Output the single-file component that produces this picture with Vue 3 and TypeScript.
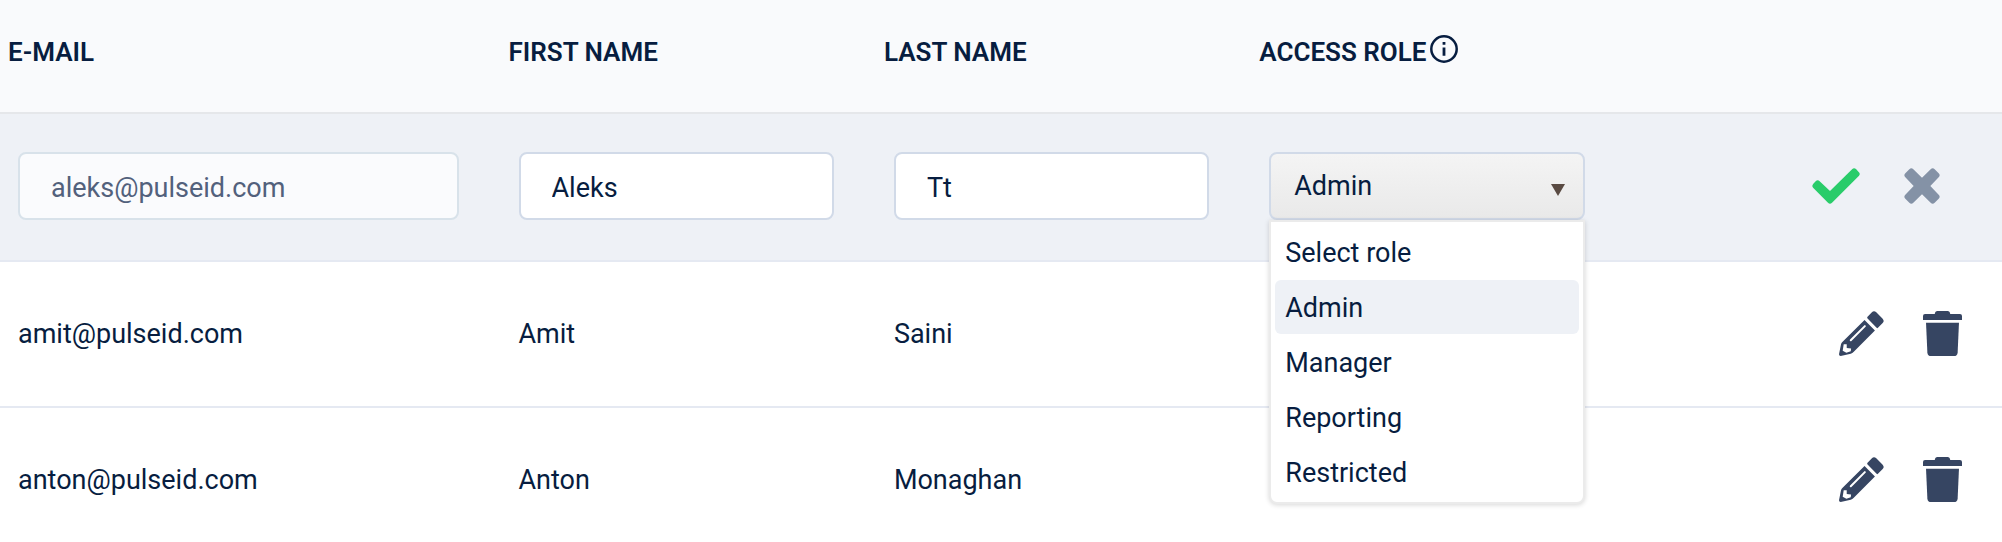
<script setup lang="ts">
import { ref } from 'vue'

interface User {
  email: string
  first: string
  last: string
}

const roles = ['Select role', 'Admin', 'Manager', 'Reporting', 'Restricted']
const role = ref('Admin')
const open = ref(true)
const draft = ref<User>({ email: 'aleks@pulseid.com', first: 'Aleks', last: 'Tt' })
const users: User[] = [
  { email: 'amit@pulseid.com', first: 'Amit', last: 'Saini' },
  { email: 'anton@pulseid.com', first: 'Anton', last: 'Monaghan' },
]

function toggle() {
  open.value = !open.value
}

function choose(value: string) {
  role.value = value
  open.value = false
}
</script>

<template>
  <main class="page">
    <table class="users">
      <colgroup>
        <col class="col-email" />
        <col class="col" />
        <col class="col" />
        <col class="col" />
        <col class="col" />
      </colgroup>
      <thead>
        <tr>
          <th scope="col">E-MAIL</th>
          <th scope="col">FIRST NAME</th>
          <th scope="col">LAST NAME</th>
          <th scope="col">
            <span class="with-icon">
              ACCESS ROLE
              <svg class="info" viewBox="0 0 28 28" aria-hidden="true">
                <circle cx="14" cy="14" r="12.7" fill="none" stroke="currentColor" stroke-width="2.5" />
                <path d="M12.6 7h2.8v2.8h-2.8zM12.6 12.4h2.8v8.4h-2.8z" fill="currentColor" />
              </svg>
            </span>
          </th>
          <td></td>
        </tr>
      </thead>
      <tbody>
        <tr class="editing">
          <td><input class="field" type="email" aria-label="E-mail" :value="draft.email" disabled /></td>
          <td><input v-model="draft.first" class="field" type="text" aria-label="First name" /></td>
          <td><input v-model="draft.last" class="field" type="text" aria-label="Last name" /></td>
          <td>
            <div class="picker">
              <select v-model="role" class="select" aria-label="Access role" @mousedown.prevent="toggle">
                <option v-for="r in roles" :key="r">{{ r }}</option>
              </select>
              <svg class="arrow" viewBox="0 0 14 12" aria-hidden="true"><path d="M0 0h14L7 12z" fill="#594a42" /></svg>
              <div v-if="open" class="menu" role="listbox" aria-label="Access role">
                <button
                  v-for="r in roles"
                  :key="r"
                  type="button"
                  role="option"
                  class="item"
                  :class="{ active: r === role }"
                  :aria-selected="r === role"
                  @click="choose(r)"
                >
                  {{ r }}
                </button>
              </div>
            </div>
          </td>
          <td>
            <div class="actions confirm">
              <button type="button" class="icon save" aria-label="Save">
                <svg viewBox="0 0 144 108">
                  <path d="M4 47L11 40Q17 33 23 40L54 69L121 3Q126-2 132 3L140 12Q146 18 141 23L60 104Q54 110 48 104L4 60Q-2 54 4 47Z" />
                </svg>
              </button>
              <button type="button" class="icon cancel" aria-label="Cancel">
                <svg viewBox="0 0 108 108">
                  <path d="M4 16L16 4Q22-2 28 4L54 29L80 4Q86-2 92 4L104 16Q110 22 104 28L79 54L104 80Q110 86 104 92L92 104Q86 110 80 104L54 79L28 104Q22 110 16 104L4 92Q-2 86 4 80L29 54L4 28Q-2 22 4 16Z" />
                </svg>
              </button>
            </div>
          </td>
        </tr>
        <tr v-for="u in users" :key="u.email">
          <td>{{ u.email }}</td>
          <td>{{ u.first }}</td>
          <td>{{ u.last }}</td>
          <td></td>
          <td>
            <div class="actions">
              <button type="button" class="icon edit" :aria-label="`Edit ${u.email}`">
                <svg viewBox="0 0 134 134">
                  <path d="M85 17L98 4Q104-2 111 4L130 23Q136 30 130 36L116 50Q114 52 112 50L85 22Q83 19 85 17Z" />
                  <path d="M76 27L107 58L44 121Q40 125 35 127L5 134Q0 134 0 129L6 99Q7 95 10 92Z" />
                  <path d="M77 45L35 87" fill="none" stroke="#fff" stroke-width="6" stroke-linecap="round" />
                  <path d="M14 99H23V110L36 112L35 120L22 124L11 118Z" fill="#fff" />
                </svg>
              </button>
              <button type="button" class="icon delete" :aria-label="`Delete ${u.email}`">
                <svg viewBox="0 0 116 134">
                  <path d="M6 9H35Q36 0 43 0H73Q80 0 81 9H110Q116 9 116 15V27H0V15Q0 9 6 9Z" />
                  <path d="M9 35H107L103 124Q102 134 92 134H24Q14 134 13 124Z" />
                </svg>
              </button>
            </div>
          </td>
        </tr>
      </tbody>
    </table>
  </main>
</template>

<style>
body {
  margin: 0;
  background: #fff;
}
</style>

<style scoped>
.page {
  max-height: 100vh;
  overflow: hidden;
  color: #071d40;
  font: 400 27px/36px Roboto, "Liberation Sans", sans-serif;
}

.users {
  width: 100%;
  table-layout: fixed;
  border-collapse: separate;
  border-spacing: 0;
}

.col-email {
  width: 25%;
}

.col {
  width: 18.75%;
}

thead tr {
  background: #f9fafc;
}

th {
  height: 68px;
  padding: 18px 8px 26px;
  border-bottom: 2px solid #e5e7ea;
  font-size: 26px;
  font-weight: 600;
  text-align: left;
  white-space: nowrap;
}

thead td {
  border-bottom: 2px solid #e5e7ea;
}

.with-icon {
  display: flex;
  align-items: center;
  gap: 4px;
}

.info {
  width: 28px;
  height: 28px;
  margin-bottom: 6px;
}

tbody td {
  height: 144px;
  padding: 0 42px 0 18px;
  border-bottom: 2px solid #e5e9f2;
}

tbody td:last-child {
  padding-right: 40px;
}

tbody .editing td {
  height: 108px;
  padding-top: 38px;
  vertical-align: top;
  background: #eef1f6;
}

.field,
.select {
  display: block;
  box-sizing: border-box;
  width: 100%;
  height: 68px;
  margin: 0;
  border: 2px solid #d1dae8;
  border-radius: 8px;
  background: #fff;
  color: inherit;
  font: inherit;
  outline: none;
}

.field {
  padding: 4px 31px 0;
}

.field:disabled {
  border-color: #d8e2ea;
  background: #fafbfd;
  color: #52617c;
}

.picker {
  position: relative;
}

.select {
  padding: 0 23px;
  appearance: none;
  background: linear-gradient(#f4f4f4, #e9e9e9);
}

.arrow {
  position: absolute;
  top: 32px;
  right: 20px;
  width: 14px;
  height: 12px;
  pointer-events: none;
}

.menu {
  position: absolute;
  z-index: 1;
  top: 68px;
  right: 0;
  left: 0;
  display: grid;
  gap: 1px;
  padding: 3px 4px;
  border: 2px solid #ebebeb;
  border-radius: 0 0 8px 8px;
  background: #fff;
  box-shadow: 0 1px 5px rgba(0, 0, 0, 0.16);
}

.item {
  height: 54px;
  padding: 2px 10px 0;
  border: 0;
  border-radius: 6px;
  background: none;
  color: inherit;
  font: inherit;
  text-align: left;
}

.item.active {
  background: #eef1f6;
}

.actions {
  display: flex;
  align-items: center;
  justify-content: flex-end;
  gap: 39px;
}

.actions.confirm {
  height: 68px;
  gap: 44px;
  padding-right: 22px;
}

.icon {
  padding: 0;
  border: 0;
  background: none;
  color: #364562;
  cursor: pointer;
}

.icon svg {
  display: block;
  width: 100%;
  fill: currentColor;
}

.save {
  width: 48px;
  color: #29cc6a;
}

.cancel {
  width: 36px;
  color: #8492a6;
}

.edit {
  width: 45px;
}

.delete {
  width: 39px;
}
</style>
